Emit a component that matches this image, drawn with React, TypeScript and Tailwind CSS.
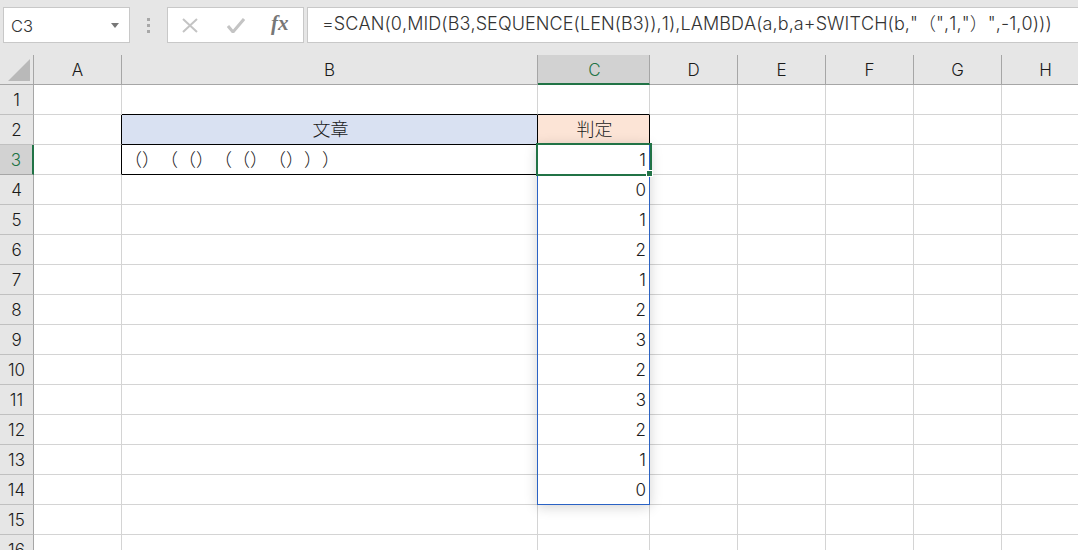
import React from "react";

const cols = ["A", "B", "C", "D", "E", "F", "G", "H"];
const values = ["1", "0", "1", "2", "1", "2", "3", "2", "3", "2", "1", "0"];
const rows = Array.from({ length: 16 }, (_, i) => i + 1);
const formula = '=SCAN(0,MID(B3,SEQUENCE(LEN(B3)),1),LAMBDA(a,b,a+SWITCH(b,"（",1,"）",-1,0)))';

function cellClass(r: number, c: string) {
  const right =
    (c === "A" && (r === 2 || r === 3)) || (c === "B" && (r === 2 || r === 3)) || (c === "C" && r === 2)
      ? "border-r-black"
      : "border-r-[#d4d4d4]";
  const bottom =
    ((c === "B" || c === "C") && (r === 1 || r === 2)) || (c === "B" && r === 3)
      ? "border-b-black"
      : "border-b-[#d4d4d4]";
  const bg = c === "B" && r === 2 ? "bg-[#d9e1f2]" : c === "C" && r === 2 ? "bg-[#fce4d6]" : "bg-white";
  return `flex items-center border-r border-b overflow-hidden whitespace-nowrap pt-px ${right} ${bottom} ${bg}`;
}

function cellContent(r: number, c: string) {
  if (c === "B" && r === 2) return <span className="w-full pl-[2px] text-center text-[18px]">文章</span>;
  if (c === "C" && r === 2) return <span className="w-full pl-[2px] text-center text-[18px]">判定</span>;
  if (c === "B" && r === 3)
    return <span className="pl-[2px] text-[18px] [font-kerning:none] [text-spacing-trim:space-all]">（）（（）（（）（）））</span>;
  if (c === "C" && r >= 3 && r <= 14) return <span className="w-full pr-[3px] text-right">{values[r - 3]}</span>;
  return null;
}

export default function App() {
  return (
    <div className="h-[550px] w-[1078px] overflow-hidden bg-[#e6e6e6] text-[17px] leading-none font-light text-[#1a1a1a] [font-family:'Inter','Noto_Sans_CJK_JP',sans-serif]">
      <div className="flex h-[55px] items-start pt-[7px]">
        <div className="ml-[3px] flex h-[36px] w-[127px] items-center justify-between border border-[#c8c8c8] bg-white pt-[2px] pr-[10px] pl-[7px] text-[16.5px] text-[#333]">
          <span>C3</span>
          <svg className="-mt-[2px]" width="8" height="5" viewBox="0 0 8 5"><path d="M0 0h8L4 5z" fill="#777" /></svg>
        </div>
        <div className="flex h-[36px] w-[37px] flex-col items-center justify-center gap-[3px]">
          <span className="h-[3px] w-[3px] bg-[#a8a8a8]" />
          <span className="h-[3px] w-[3px] bg-[#a8a8a8]" />
          <span className="h-[3px] w-[3px] bg-[#a8a8a8]" />
        </div>
        <div className="flex h-[36px] w-[137px] items-center border border-[#c8c8c8] bg-white">
          <svg className="ml-[14px]" width="16" height="15" viewBox="0 0 16 15">
            <path d="M1 1l14 13M15 1L1 14" stroke="#c4c4c4" strokeWidth="2" fill="none" />
          </svg>
          <svg className="ml-[29px]" width="18" height="15" viewBox="0 0 18 15">
            <path d="M1 8l5 6L17 1" stroke="#c4c4c4" strokeWidth="3" fill="none" />
          </svg>
          <span className="ml-[26px] mb-[3px] text-[21px] font-bold text-[#777] italic [font-family:'Liberation_Serif',serif]">fx</span>
        </div>
        <div className="ml-[3px] flex h-[36px] flex-1 items-center overflow-hidden border-t border-b border-l border-[#c8c8c8] bg-white pb-[2px] pl-[14px] whitespace-nowrap text-[#333]">
          <span className="text-[18px] tracking-[0.09px] [font-kerning:none] [text-spacing-trim:space-all]">{formula}</span>
        </div>
      </div>

      <div className="relative grid grid-cols-[34px_88px_416px_112px_88px_88px_88px_88px_88px] grid-rows-[repeat(17,30px)]">
        <div className="flex items-end justify-end border-r border-b border-r-[#a6a6a6] border-b-[#a6a6a6] pr-[3px] pb-[3px]">
          <svg width="22" height="22" viewBox="0 0 22 22"><path d="M22 0v22H0z" fill="#b9b9b9" /></svg>
        </div>
        {cols.map((c) => (
          <div
            key={c}
            className={
              c === "C"
                ? "flex items-center justify-center border-r border-b-2 border-r-[#a6a6a6] border-b-[#217346] bg-[#d2d2d2] pt-[2px] pl-[2px] text-[#217346]"
                : "flex items-center justify-center border-r border-b border-r-[#a6a6a6] border-b-[#a6a6a6] pt-px"
            }
          >
            {c}
          </div>
        ))}
        {rows.map((r) => (
          <React.Fragment key={r}>
            <div
              className={
                r === 3
                  ? "flex items-center justify-center border-r-2 border-b border-r-[#217346] border-b-[#a6a6a6] bg-[#d2d2d2] pt-px text-[#217346]"
                  : "flex items-center justify-center border-r border-b border-r-[#a6a6a6] border-b-[#c0c0c0] pt-px"
              }
            >
              {r}
            </div>
            {cols.map((c) => (
              <div key={c} className={cellClass(r, c)}>
                {cellContent(r, c)}
              </div>
            ))}
          </React.Fragment>
        ))}

        <div className="pointer-events-none absolute col-start-4 col-end-5 row-start-4 row-end-16 -top-px right-0 bottom-0 -left-px border border-[#2a62c4] shadow-[0_2px_12px_rgba(0,0,0,0.18)]" />
        <div className="pointer-events-none absolute col-start-4 col-end-5 row-start-4 row-end-5 -top-[2px] -right-[2px] -bottom-[1px] -left-[2px] border-2 border-[#217346]">
          <span className="absolute -right-[3px] -bottom-[3px] h-[7px] w-[7px] border border-white bg-[#217346]" />
        </div>
      </div>
    </div>
  );
}
